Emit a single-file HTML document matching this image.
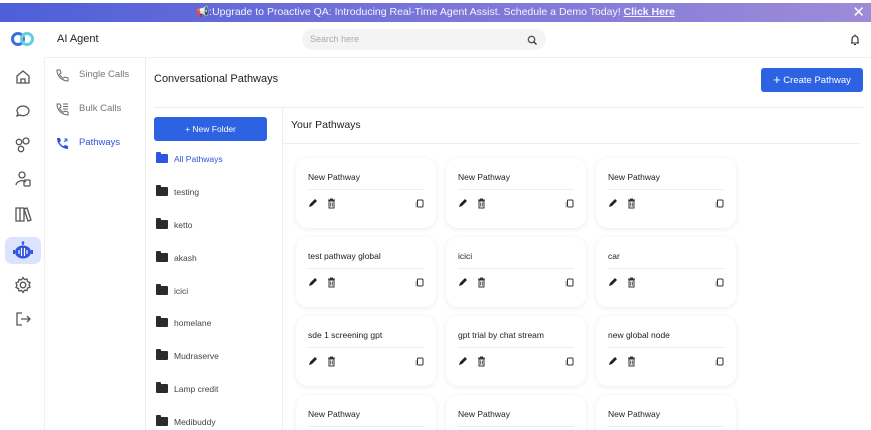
<!DOCTYPE html>
<html style="width:871px;height:430px;overflow:hidden"><head><meta charset="utf-8">
<style>
*{box-sizing:border-box;margin:0;padding:0}
body{width:871px;height:430px;overflow:hidden;background:#fff;font-family:"Liberation Sans",sans-serif;color:#222;position:relative}
.abs{position:absolute}
.banner{left:0;top:3px;width:871px;height:19px;background:linear-gradient(90deg,#4d5fd8,#7a75d8 50%,#9d8bd8);color:#f4f4ff;font-size:10.5px;text-align:center;line-height:19px}
.banner u{font-weight:bold}
.ic{stroke:#555;fill:none;stroke-width:1.3}
.card{position:absolute;width:140px;height:70px;background:#fff;border-radius:12px;box-shadow:0 1px 6px rgba(0,0,0,.08)}
.card .t{position:absolute;left:12px;top:14px;font-size:8.5px;color:#222}
.card .l{position:absolute;left:12px;right:12px;top:31px;border-top:1px solid #eee}
.card svg{position:absolute}
.fold{position:absolute;left:156px;font-size:8.5px;color:#444}
.fold i{display:inline-block;width:12px;height:9px;background:#2b2b2b;border-radius:1px;vertical-align:-1px;margin-right:6px;position:relative}
.fold i:before{content:"";position:absolute;left:0;top:-2px;width:5px;height:3px;background:inherit;border-radius:1px 1px 0 0}
</style></head><body>
<div class="abs banner">📢:Upgrade to Proactive QA: Introducing Real-Time Agent Assist. Schedule a Demo Today! <u>Click Here</u></div>
<div class="abs" style="right:6px;top:4px;color:#fff;font-size:15px;line-height:17px">✕</div>
<svg class="abs" style="left:11px;top:32px" width="24" height="14"><circle cx="7" cy="7" r="5.5" fill="none" stroke="#3b6fe0" stroke-width="3"/><circle cx="16" cy="7" r="5.5" fill="none" stroke="#5fd0e0" stroke-width="3"/></svg>
<div class="abs" style="left:57px;top:33px;font-size:11px;color:#222">AI Agent</div>
<div class="abs" style="left:302px;top:29px;width:244px;height:21px;background:#f4f4f4;border-radius:11px"></div>
<div class="abs" style="left:310px;top:34px;font-size:9px;color:#aaa">Search here</div>
<svg class="abs" style="left:527px;top:35px" width="10" height="10"><circle cx="4.5" cy="4.5" r="3.2" class="ic" stroke="#333"/><path d="M7 7l2.5 2.5" stroke="#333" stroke-width="1.3"/></svg>
<svg class="abs" style="left:849px;top:33px" width="12" height="13"><path d="M3 10V6a3 3 0 016 0v4H2h8M6 3V1.5M5 11.5h2" stroke="#222" stroke-width="1.1" fill="none"/></svg>
<div class="abs" style="left:45px;top:57px;width:826px;border-top:1px solid #f0f0f0"></div>
<svg class="abs" style="left:14px;top:68px" width="18" height="18"><path d="M3 8l6-5 6 5v7H3z M7 15v-4h4v4" class="ic"/></svg>
<svg class="abs" style="left:14px;top:102px" width="18" height="18"><path d="M3 9a6 5 0 1112 0 6 5 0 01-9 4l-3 1 1-3a5 5 0 01-1-2z" class="ic"/></svg>
<svg class="abs" style="left:14px;top:136px" width="18" height="18"><circle cx="5" cy="6" r="2.7" class="ic"/><circle cx="12" cy="5" r="3" class="ic"/><circle cx="7" cy="13" r="2.7" class="ic"/></svg>
<svg class="abs" style="left:14px;top:170px" width="18" height="18"><circle cx="8" cy="5" r="3" class="ic"/><path d="M2 15a6 5 0 0110-3" class="ic"/><rect x="10" y="10" width="6" height="6" rx="1" class="ic"/></svg>
<svg class="abs" style="left:14px;top:205px" width="18" height="18"><path d="M2 3h4v13H2zM6 3h4v13H6zM10 4l3-1 4 12-3 1z" class="ic"/></svg>
<div class="abs" style="left:5px;top:237px;width:36px;height:27px;background:#dbe3ff;border-radius:7px"></div>
<svg class="abs" style="left:12px;top:241px" width="22" height="20"><path d="M11 1v3" stroke="#2d55e0" stroke-width="1.5"/><circle cx="11" cy="1.5" r="1.3" fill="#2d55e0"/><ellipse cx="11" cy="11" rx="8" ry="6.5" fill="#2d55e0"/><rect x="1" y="9" width="2" height="4" fill="#2d55e0"/><rect x="19" y="9" width="2" height="4" fill="#2d55e0"/><path d="M7 9v4M9.5 7v8M12.5 7v8M15 9v4" stroke="#fff" stroke-width="1.2"/></svg>
<svg class="abs" style="left:14px;top:276px" width="18" height="18"><circle cx="9" cy="9" r="2.8" class="ic"/><path d="M9 1.5l1.5 2 2.5-.5.5 2.5 2.5 1-1 2.3 1 2.3-2.5 1-.5 2.5-2.5-.5L9 16.5l-1.5-2-2.5.5-.5-2.5-2.5-1 1-2.3-1-2.3 2.5-1 .5-2.5 2.5.5z" class="ic"/></svg>
<svg class="abs" style="left:14px;top:310px" width="18" height="18"><path d="M8 3H3v12h5M7 9h9M13 6l3 3-3 3" class="ic"/></svg>
<div class="abs" style="left:44px;top:57px;height:373px;border-left:1px solid #f0f0f0"></div>
<div class="abs" style="left:145px;top:57px;height:373px;border-left:1px solid #eee"></div>
<svg class="abs" style="left:55px;top:68px" width="14" height="14"><path d="M2 2h3l1 3-1.5 1.2a8 8 0 004 4L10 9l3 1v3A11 11 0 012 2z" fill="none" stroke="#666" stroke-width="1"/></svg>
<div class="abs" style="left:79px;top:69px;font-size:9.5px;color:#777">Single Calls</div>
<svg class="abs" style="left:55px;top:102px" width="14" height="14"><path d="M2 2h3l1 3-1.5 1.2a8 8 0 004 4L10 9l3 1v3A11 11 0 012 2zM8 2h5M8 4.5h5M8 7h5" fill="none" stroke="#666" stroke-width="1"/></svg>
<div class="abs" style="left:79px;top:103px;font-size:9.5px;color:#777">Bulk Calls</div>
<svg class="abs" style="left:55px;top:136px" width="14" height="14"><path d="M2 2h3l1 3-1.5 1.2a8 8 0 004 4L10 9l3 1v3A11 11 0 012 2z" fill="#2d55e0"/><path d="M9 6l3-3M12 3v2.5M12 3H9.5" stroke="#2d55e0" stroke-width="1"/></svg>
<div class="abs" style="left:79px;top:137px;font-size:9.5px;color:#2d55e0">Pathways</div>
<div class="abs" style="left:154px;top:73px;font-size:11px;color:#222">Conversational Pathways</div>
<div class="abs" style="left:761px;top:68px;width:102px;height:24px;background:#2d62e3;border-radius:3px;color:#fff;font-size:9.5px;line-height:24px;text-align:center"><span style="font-size:13px;vertical-align:-1px">+</span> Create Pathway</div>
<div class="abs" style="left:154px;top:107px;width:709px;border-top:1px solid #eee"></div>
<div class="abs" style="left:282px;top:107px;height:323px;border-left:1px solid #eee"></div>
<div class="abs" style="left:154px;top:117px;width:113px;height:24px;background:#2d62e3;border-radius:3px;color:#fff;font-size:8.5px;line-height:24px;text-align:center">+ New Folder</div>
<div class="fold" style="top:154px;color:#2d55e0"><i style="background:#2d55e0"></i>All Pathways</div>
<div class="fold" style="top:187px"><i></i>testing</div>
<div class="fold" style="top:220px"><i></i>ketto</div>
<div class="fold" style="top:253px"><i></i>akash</div>
<div class="fold" style="top:286px"><i></i>icici</div>
<div class="fold" style="top:318px"><i></i>homelane</div>
<div class="fold" style="top:351px"><i></i>Mudraserve</div>
<div class="fold" style="top:384px"><i></i>Lamp credit</div>
<div class="fold" style="top:417px"><i></i>Medibuddy</div>
<div class="abs" style="left:291px;top:119px;font-size:10.5px;color:#222">Your Pathways</div>
<div class="abs" style="left:283px;top:143px;width:577px;border-top:1px solid #eee"></div>
<div class="abs" style="left:283px;top:144px;width:588px;height:286px;overflow:hidden"><div id="cards" style="position:relative;left:-283px;top:-144px"></div></div>
<script>
var names=[["New Pathway","New Pathway","New Pathway"],["test pathway global","icici","car"],["sde 1 screening gpt","gpt trial by chat stream","new global node"],["New Pathway","New Pathway","New Pathway"]];
var h="";
var xs=[296,446,596],ys=[158,237,316,395];
for(var r=0;r<4;r++)for(var c=0;c<3;c++){
h+='<div class="card" style="left:'+xs[c]+'px;top:'+ys[r]+'px"><div class="t">'+names[r][c]+'</div><div class="l"></div>'+
'<svg style="left:12px;top:41px" width="9" height="9"><path d="M1 8l1-3 5-5 2 2-5 5z" fill="#222"/></svg>'+
'<svg style="left:31px;top:40px" width="9" height="11"><path d="M1 2h7M3 1h3M2 3h5v7H2z" fill="none" stroke="#333" stroke-width="1"/><path d="M3.7 4.5v4M5.3 4.5v4" stroke="#333" stroke-width=".8"/></svg>'+
'<svg style="left:119px;top:41px" width="9" height="10"><rect x="2.5" y="1" width="5.5" height="7" rx="1" fill="none" stroke="#333" stroke-width="1"/><path d="M1 3v5.5" stroke="#999" stroke-width="1"/></svg></div>';
}
document.getElementById("cards").innerHTML=h;
</script>
</body></html>
